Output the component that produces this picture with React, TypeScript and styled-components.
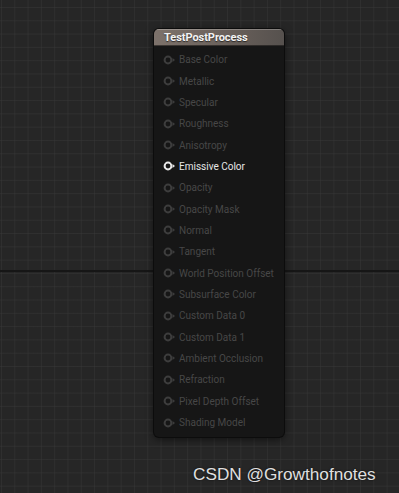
import React from "react";
import styled, { createGlobalStyle } from "styled-components";

const Global = createGlobalStyle`
  html, body { margin: 0; padding: 0; background: #262626; }
  #root { width: 399px; height: 493px; }
`;

const Canvas = styled.div`
  position: relative;
  width: 399px;
  height: 493px;
  box-sizing: border-box;
  padding: 29px 0 0 154px;
  overflow: hidden;
  background-color: #262626;
  background-image:
    linear-gradient(to bottom, transparent 270px, #161616 270px, #161616 272px, transparent 272px),
    linear-gradient(to right, rgba(58,58,58,0.45) 1px, transparent 1px),
    linear-gradient(to bottom, rgba(58,58,58,0.45) 1px, transparent 1px);
  background-size: 100% 100%, 13.3px 13.3px, 13.3px 13.3px;
  background-position: 0 0, 1px 0, 0 7px;
  font-family: Roboto, "Liberation Sans", sans-serif;
`;

const Node = styled.div`
  width: 130px;
  border-radius: 5px;
  background: #161616;
  box-shadow: 0 0 0 1px #0c0c0c, 0 2px 8px rgba(0, 0, 0, 0.6);
  overflow: hidden;
`;

const Header = styled.div`
  height: 17px;
  display: flex;
  align-items: center;
  padding-left: 10px;
  background: linear-gradient(to right, #7d726b 0%, #6a615b 55%, #56514e 100%);
  box-shadow: inset 0 1px 0 rgba(255, 255, 255, 0.25), inset 0 -1px 0 rgba(0,0,0,0.5);
  color: #f2f2f2;
  font-weight: 700;
  font-size: 11px;
  letter-spacing: -0.05px;
  text-shadow: 0 1px 1px rgba(0, 0, 0, 0.6);
`;

const Pins = styled.div`
  display: flex;
  flex-direction: column;
  padding: 3px 0 4px 0;
`;

const Row = styled.div<{ $active?: boolean }>`
  height: 21.35px;
  display: flex;
  align-items: center;
  gap: 3px;
  padding-left: 9px;
  font-size: 10px;
  color: ${(p) => (p.$active ? "#e6e6e6" : "#474747")};
`;

const PinIcon = ({ active }: { active?: boolean }) => {
  const c = active ? "#e8e8e8" : "#3d3d3d";
  return (
    <svg width="13" height="10" viewBox="0 0 13 10">
      <circle cx="5" cy="5" r="3.4" fill="none" stroke={c} strokeWidth="2" />
      <path d="M9.5 3 L12 5 L9.5 7 Z" fill={c} />
    </svg>
  );
};

const Watermark = styled.div`
  position: absolute;
  left: 193px;
  top: 464px;
  font-family: "Liberation Sans", Arial, sans-serif;
  font-size: 17.2px;
  line-height: 20px;
  color: #e0e0e0;
  text-shadow: 0 0 2px rgba(0, 0, 0, 0.8);
  white-space: nowrap;
`;

const pins = [
  "Base Color",
  "Metallic",
  "Specular",
  "Roughness",
  "Anisotropy",
  "Emissive Color",
  "Opacity",
  "Opacity Mask",
  "Normal",
  "Tangent",
  "World Position Offset",
  "Subsurface Color",
  "Custom Data 0",
  "Custom Data 1",
  "Ambient Occlusion",
  "Refraction",
  "Pixel Depth Offset",
  "Shading Model",
];

export default function App() {
  return (
    <>
      <Global />
      <Canvas>
        <Node>
          <Header>TestPostProcess</Header>
          <Pins>
            {pins.map((p) => {
              const active = p === "Emissive Color";
              return (
                <Row key={p} $active={active}>
                  <PinIcon active={active} />
                  <span>{p}</span>
                </Row>
              );
            })}
          </Pins>
        </Node>
        <Watermark>CSDN @Growthofnotes</Watermark>
      </Canvas>
    </>
  );
}
